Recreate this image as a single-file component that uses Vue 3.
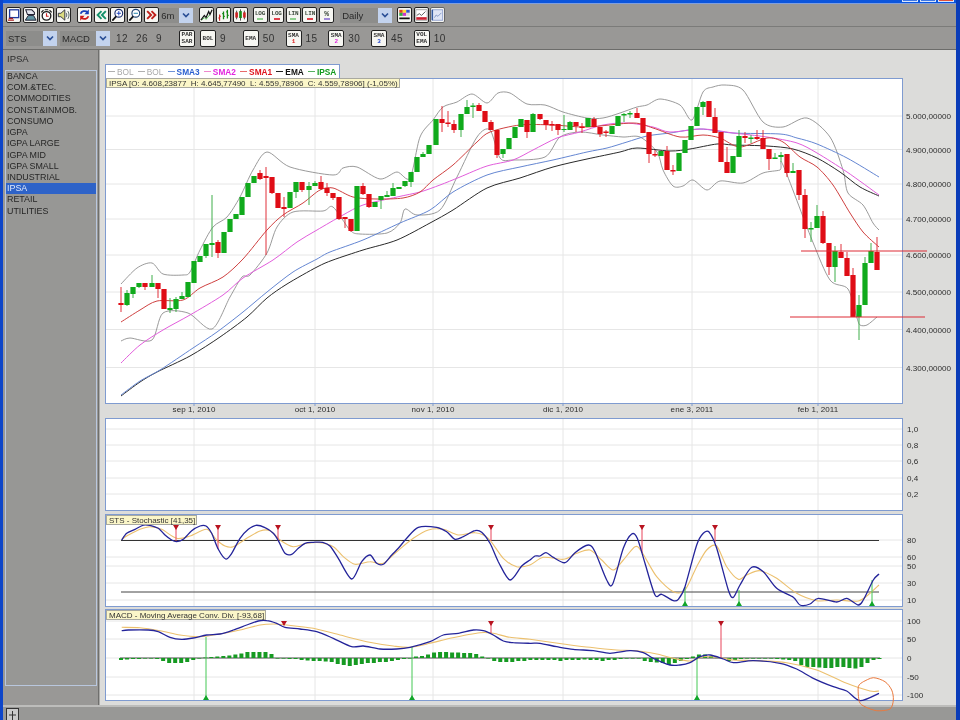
<script setup>
const z = (ox, oy, a) => a.map((p) => [ox + p[0] / 3, oy + p[1] / 3])
const smooth = (a) => {
  let d = `M${a[0][0].toFixed(1)} ${a[0][1].toFixed(1)}`
  for (let i = 0; i < a.length - 1; i++) {
    const p0 = a[Math.max(i - 1, 0)], p1 = a[i], p2 = a[i + 1], p3 = a[Math.min(i + 2, a.length - 1)]
    const c1x = p1[0] + (p2[0] - p0[0]) / 7, c1y = p1[1] + (p2[1] - p0[1]) / 7
    const c2x = p2[0] - (p3[0] - p1[0]) / 7, c2y = p2[1] - (p3[1] - p1[1]) / 7
    d += `C${c1x.toFixed(1)} ${c1y.toFixed(1)} ${c2x.toFixed(1)} ${c2y.toFixed(1)} ${p2[0].toFixed(1)} ${p2[1].toFixed(1)}`
  }
  return d
}

const sectors = ['BANCA', 'COM.&TEC.', 'COMMODITIES', 'CONST.&INMOB.', 'CONSUMO', 'IGPA', 'IGPA LARGE', 'IGPA MID', 'IGPA SMALL', 'INDUSTRIAL', 'IPSA', 'RETAIL', 'UTILITIES']

const legend = [
  { name: 'BOL', c: '#a8a8a8', l: '#b0b0b0', w: 400 },
  { name: 'BOL', c: '#a8a8a8', l: '#b0b0b0', w: 400 },
  { name: 'SMA3', c: '#2a5fd0', l: '#6f93d8', w: 700 },
  { name: 'SMA2', c: '#e326e0', l: '#ee88cc', w: 700 },
  { name: 'SMA1', c: '#e0141e', l: '#e86a6a', w: 700 },
  { name: 'EMA', c: '#111', l: '#222', w: 700 },
  { name: 'IPSA', c: '#109a1c', l: '#55b060', w: 700 },
]

const vgrid = [194, 315, 433, 563, 692, 818]
const dates = ['sep 1, 2010', 'oct 1, 2010', 'nov 1, 2010', 'dic 1, 2010', 'ene 3, 2011', 'feb 1, 2011']
const priceAxis = [[116, '5.000,00000'], [149.5, '4.900,00000'], [184, '4.800,00000'], [219, '4.700,00000'], [255, '4.600,00000'], [292, '4.500,00000'], [329.5, '4.400,00000'], [367.5, '4.300,00000']]
const midAxis = [[429, '1,0'], [445, '0,8'], [461, '0,6'], [478, '0,4'], [494, '0,2']]
const stsAxis = [[540, '80'], [557, '60'], [566, '50'], [583, '30'], [600, '10']]
const macdAxis = [[621, '100'], [639, '50'], [658, '0'], [677, '-50'], [695, '-100']]

const candles = [
  [121,'r',303,305,287,312],[127,'g',293,305,290,306],[133,'g',287,294,287,298],[139,'g',283,287,283,288],
  [145,'r',283,287,283,290],[152,'g',283,287,275,287],[158,'r',283,289,283,298],[164,'r',289,309,289,309],
  [170,'g',308,310,298,313],[176,'g',299,309,297,312],[182,'g',296,299,292,299],[188,'g',282,297,282,297],
  [194,'g',261,283,261,283],[200,'g',256,262,256,262],[206,'g',244,256,244,258],[212,'g',243,245,195,257],
  [218,'r',242,253,240,258],[224,'g',232,253,232,253],[230,'g',219,232,219,232],[236,'g',214,219,214,219],
  [242,'g',197,215,197,215],[248,'g',183,197,183,197],[254,'g',176,183,176,183],[260,'r',173,179,170,180],
  [266,'r',176,178,167,255],[272,'r',177,193,177,194],[278,'r',193,208,193,208],[284,'r',207,209,197,217],
  [290,'g',192,208,192,208],[296,'g',182,192,182,198],[302,'r',182,190,182,192],[309,'g',186,190,182,205],
  [315,'g',183,186,181,186],[321,'r',182,189,176,190],[327,'r',188,193,183,196],[333,'r',193,198,193,200],
  [339,'r',197,219,197,220],[345,'r',217,219,218,228],[351,'r',219,231,219,232],[357,'g',186,231,186,231],
  [363,'r',186,194,183,195],[369,'r',194,207,194,208],[375,'g',202,207,202,207],[381,'g',196,200,196,209],
  [387,'g',195,197,191,197],[393,'g',188,196,183,196],[399,'g',187,189,187,189],[405,'g',181,186,181,187],
  [411,'g',172,182,172,187],[417,'g',157,172,157,172],[423,'g',154,157,152,157],[429,'g',145,154,145,154],
  [436,'g',119,145,119,145],[442,'r',119,123,106,132],[448,'r',122.5,124,111,127],[454,'r',124,130,120,133],
  [461,'g',114,130,114,137],[467,'g',107,114,100,114],[473,'g',105.5,107,103,118],[479,'r',105,111,103,111],
  [485,'r',111,122,111,122],[491,'r',122,130,120,130],[497,'r',130,155,130,158],[503,'g',149,154,149,158],
  [509,'g',138,149,138,149],[515,'g',127,138,127,138],[521,'g',119,127,119,127],[527,'r',120,132,120,138],
  [533,'g',114,132,113,132],[540,'r',114,119,114,120],[546,'r',120,125,120,130],[552,'r',124,125.5,121,131],
  [558,'r',124,130,124,135],[564,'g',129,130,115,132],[570,'g',122,130,121,130],[576,'r',122,126,122,132],
  [582,'r',126.5,128,123,133],[588,'g',118,127,118,127],[594,'r',119,127,117,127],[600,'r',127,134,127,137],
  [606,'r',131.5,133,130,137],[612,'g',126,134,126,134],[618,'g',116,126,116,126],[624,'g',114,115.5,113,122],
  [630,'g',113,114.5,111,118],[637,'r',113,118,108,118],[643,'r',118,133,118,133],[649,'r',132,154,132,163],
  [655,'r',154,155.5,150,157],[661,'g',151,156,151,156],[667,'r',151,170,146,170],[673,'r',170,171.5,165,175],
  [679,'g',153,171,153,171],[685,'g',140,153,140,153],[691,'g',126,140,126,140],[697,'g',107,126,107,126],
  [703,'g',102,107,101,115],[709,'r',101,117,101,117],[715,'r',117,133,108,133],[721,'r',132,162,132,162],
  [727,'r',162,173,147,173],[733,'g',156,173,156,173],[739,'g',136,157,130,157],[745,'r',136,138,132,143],
  [751,'g',137.5,139,135,143],[757,'r',137,139,130,140],[763,'r',138,149,130,149],[769,'r',149,159,149,170],
  [775,'g',157.5,159,153,159],[781,'g',155,157,152,162],[787,'r',154,173,154,177],[793,'g',171,173,163,173],
  [799,'r',170,195,170,200],[805,'r',195,229,189,238],[811,'g',228,229.5,222,242],[817,'g',216,228,205,228],
  [823,'r',216,243,211,244],[829,'r',243,267,243,275],[835,'g',251,267,246,282],[841,'r',252,258,244,258],
  [847,'r',258,276,252,276],[853,'r',275,317,268,317],[859,'g',305,317,295,340],[865,'g',263,305,257,305],
  [871,'g',251,263,243,263],[877,'r',252,270,237,270],
]

const ema = [[121,396],[140,382],[157,372],[190,356],[220,337],[247,317],[267,298],[287,284],[317,267],[333,260],[363,250],[397,240],[430,223],[453,210],[487,188],[520,178],[553,167],[587,159],[620,152],[637,148],[670,151],[690,149],[717,144],[733,145],[767,146],[793,149],[817,158],[840,172],[860,187],[879,196]]
const sma3 = [[121,395],[140,381],[160,370],[193,348],[217,332],[243,312],[267,292],[293,272],[317,259],[330,252],[363,240],[400,223],[430,210],[453,192],[487,175],[520,167],[553,160],[587,152],[607,148],[627,142],[647,136],[670,133],[700,129],[733,133],[780,134],[797,138],[817,144],[847,158],[879,177]]
const sma2 = [[121,363],[140,345],[163,330],[190,315],[223,295],[243,278],[273,260],[297,242],[317,230],[343,215],[363,205],[397,197],[420,192],[440,185],[460,177],[487,166],[513,160],[533,150],[557,138],[580,132],[603,125],[627,123],[653,127],[670,132],[703,129],[733,133],[767,137],[797,143],[817,153],[847,172],[879,195]]
const sma1 = [[121,322],[140,310],[157,301],[183,300],[200,288],[223,277],[243,259],[267,230],[283,215],[303,203],[320,190],[333,188],[353,197],[377,199],[403,198],[420,192],[433,180],[453,165],[477,142],[490,132],[520,125],[553,125],[587,127],[633,123],[653,128],[680,137],[703,135],[720,138],[740,147],[767,138],[783,142],[800,157],[817,167],[833,185],[850,213],[863,232],[879,247]]
const bolUp = [[121,284],[137,268],[152,263],[163,274],[183,275],[190,272],[200,250],[213,227],[227,217],[240,197],[253,170],[267,152],[290,167],[333,175],[343,168],[357,167],[380,179],[397,172],[410,178],[420,137],[433,120],[443,107],[457,102],[472,94],[487,103],[498,93],[510,93],[527,104],[545,105],[563,112],[587,118],[603,118],[620,113],[637,107],[647,105],[660,99],[680,105],[692,120],[703,92],[713,87],[725,85],[743,90],[763,122],[783,127],[807,118],[830,137],[843,170],[848,193],[863,205],[873,223],[879,230]]
const bolLow = [[121,341],[130,338],[152,340],[163,313],[188,313],[212,329],[230,297],[242,277],[250,275],[267,253],[277,227],[293,212],[323,211],[333,207],[350,230],[360,234],[387,233],[400,223],[405,209],[417,215],[440,210],[457,177],[477,137],[490,130],[500,158],[513,160],[545,157],[560,137],[580,132],[603,135],[623,137],[640,137],[657,152],[663,170],[673,186],[683,186],[693,180],[707,190],[720,181],[743,183],[763,173],[780,170],[783,165],[812,240],[830,280],[848,289],[857,318],[860,325],[867,325],[877,317]]

const priceLines = [
  { key: 'bu', d: smooth(bolUp), c: '#8e8e8e', w: 0.9 },
  { key: 'bl', d: smooth(bolLow), c: '#8e8e8e', w: 0.9 },
  { key: 'e', d: smooth(ema), c: '#2a2a2a', w: 1 },
  { key: 's3', d: smooth(sma3), c: '#6486d2', w: 1 },
  { key: 's2', d: smooth(sma2), c: '#e25ddc', w: 1 },
  { key: 's1', d: smooth(sma1), c: '#cf4040', w: 1 },
]

const stsBlue = smooth([...z(100,510,[[65,90],[80,70],[105,58],[130,45],[150,46],[175,55],[195,75],[215,90],[230,95],[250,88],[275,62],[300,48],[318,48],[335,70],[355,118],[377,147],[395,130],[420,85],[445,58],[468,46],[495,53],[520,70],[535,92],[555,130],[575,133],[595,115],[615,100],[640,97],[668,97],[690,108],[715,145],[755,207],[785,155],[810,135],[830,160],[850,163],[875,135],[895,115],[920,85],[955,52],[1010,52],[1040,65],[1065,88],[1090,80],[1125,62],[1145,67],[1170,100],[1195,155],[1230,210],[1265,168]]),
  ...z(530,510,[[0,150],[15,138],[30,138],[48,128],[70,142],[105,158],[135,128],[175,105],[195,125],[230,210],[248,222],[280,115],[305,72],[322,85],[345,160],[375,255],[395,253],[430,272],[445,268],[465,230],[500,105],[520,70],[538,67],[560,115],[595,240],[610,262],[630,225],[665,172],[700,185],[740,235],[790,262],[810,285],[840,282],[865,265],[920,276],[950,265],[985,285],[1000,270],[1030,210],[1047,192]])])
const stsOrange = smooth([...z(100,510,[[65,88],[85,75],[120,58],[150,50],[185,58],[230,85],[270,78],[320,58],[350,90],[375,108],[400,110],[440,85],[480,63],[510,62],[540,90],[580,110],[620,100],[660,98],[700,110],[730,140],[765,163],[810,155],[850,160],[890,125],[940,85],[985,60],[1030,58],[1075,75],[1125,68],[1165,85],[1210,145],[1250,170]]),
  ...z(530,510,[[0,165],[40,142],[100,148],[140,130],[180,120],[215,150],[250,180],[280,150],[315,110],[335,125],[380,200],[430,245],[465,240],[500,170],[530,120],[560,108],[590,170],[625,208],[650,195],[690,182],[740,205],[800,250],[860,272],[920,270],[985,273],[1020,250],[1047,225]])])
const macdBlue = smooth([...z(100,510,[[65,362],[85,360],[145,360],[175,365],[210,382],[245,388],[280,384],[320,375],[360,372],[400,360],[440,345],[475,333],[500,332],[530,340],[555,352],[600,357],[650,365],[700,385],[755,410],[790,408],[840,417],[890,417],[930,412],[990,395],[1030,375],[1075,370],[1120,360],[1150,362],[1180,375],[1210,393],[1240,398]]),
  ...z(530,510,[[0,400],[30,400],[80,410],[130,418],[190,422],[240,430],[300,422],[340,428],[370,445],[420,465],[450,465],[480,458],[510,440],[540,435],[580,447],[610,458],[670,452],[750,460],[800,477],[850,505],[910,530],[950,543],[990,572],[1047,550]])])
const macdOrange = smooth([...z(100,510,[[65,352],[120,353],[180,362],[240,375],[300,380],[360,372],[420,360],[480,345],[520,342],[560,345],[640,355],[720,375],[800,395],[880,408],[930,412],[990,400],[1050,385],[1140,368],[1180,370],[1230,382]]),
  ...z(530,510,[[0,388],[100,402],[180,412],[260,420],[320,422],[380,432],[430,445],[480,453],[520,440],[560,442],[610,450],[680,452],[770,458],[860,480],[950,520],[1020,543],[1047,543]])])

const hist = [-2,-1.5,-1,-1,-.5,-.5,-1,-3,-5,-5,-5,-4,-2,0,.5,1,1.5,2,2.5,3.5,4.5,6,6,6,6,4,0,-.5,-1,-1,-2,-2.5,-3,-3,-3.5,-4,-6,-7,-8,-7,-6,-5,-5,-4,-4,-3,-2,-1,0,1.5,2,3.5,5.5,6,6,5.5,5.5,5,5,4,1.5,0,-3,-4,-4,-4,-3,-3,
  -2,-2,-2,-2,-2,-3,-2,-2,-2,-1.5,-2,-2,-3,-2,-2,-1,0,0,0,-3,-4,-4.5,-5,-7,-5,-3,-1,1.5,3.5,3.5,2,.5,-1,-3,-2,-1,0,0,0,0,-.5,-1,-1.5,-2,-3,-7,-9,-9,-9.5,-10,-10,-9,-9,-10,-10.5,-9,-5,-2,-1]
const bars = hist.map((v, i) => ({ x: 121 + i * 6.02 - 2, y: v > 0 ? 658 - v : 658, h: Math.max(Math.abs(v), 0.6) }))

const stsDown = [[176, 542], [218, 549], [278, 541], [491, 541], [642, 553], [715, 542]]
const stsUp = [[685, 587], [739, 590], [872, 580]]
const macdDown = [[284, 625], [491, 633], [721, 658]]
const macdUp = [[206, 637], [412, 647], [697, 657]]
const circle = smooth(z(530, 510, [[1000,515],[1030,503],[1065,515],[1085,540],[1090,570],[1080,597],[1040,602],[1005,590],[988,575],[985,530],[1000,515]]))
</script>

<template>
  <div class="window">
    <div class="titlebar">
      <span class="wbtn"></span><span class="wbtn"></span><span class="wbtn close"></span>
    </div>

    <div class="toolbar row-one">
      <div class="group">
        <button class="tool"><svg viewBox="0 0 15 15"><rect x="3" y="1.500" width="10.500" height="9" fill="#fff" stroke="#1f3a9c" stroke-width="1.500"/><path d="M1 13.500h7M2 11.500h5" stroke="#a22" stroke-width="1.500"/></svg></button>
        <button class="tool"><svg viewBox="0 0 15 15"><path d="M2 1.500h7l3 3v2.500H4z" fill="#e4e6ee" stroke="#223" stroke-width="1.200"/><path d="M1.500 13.500L5 8h6l3 5.500z" fill="#5f93a2" stroke="#223" stroke-width="1.100"/></svg></button>
        <button class="tool"><svg viewBox="0 0 15 15"><circle cx="7.500" cy="8.500" r="5" fill="#fff" stroke="#1c1c1c" stroke-width="1.500"/><path d="M7.500 5.500v3.500h2.500" fill="none" stroke="#c22" stroke-width="1.300"/><path d="M5.500 1.500h4M1.500 4.500l2.500-2.500M13.500 4.500L11 2" stroke="#1c1c1c" stroke-width="1.300"/></svg></button>
        <button class="tool"><svg viewBox="0 0 15 15"><path d="M1.500 5.500h3L9 1.500v12L4.500 9.500h-3z" fill="#dcdc80" stroke="#334" stroke-width="1.100"/><path d="M10.500 5c1 1.500 1 3.500 0 5M12.500 3c1.800 2.800 1.800 6.200 0 9" fill="none" stroke="#566" stroke-width="1.100"/></svg></button>
      </div>
      <div class="group g2">
        <button class="tool"><svg viewBox="0 0 15 15"><path d="M3 6c1-3 5-4 8-2" fill="none" stroke="#1a3fb8" stroke-width="2"/><path d="M12.500 1v5.500H7.500z" fill="#1a3fb8"/><path d="M12 9c-1 3-5 4-8 2" fill="none" stroke="#d01818" stroke-width="2"/><path d="M2.500 14V8.500h5z" fill="#d01818"/></svg></button>
        <button class="tool"><svg viewBox="0 0 15 15"><path d="M7.500 3L3 7.500 7.500 12M12.500 3L8 7.500 12.500 12" fill="none" stroke="#14916a" stroke-width="2.200"/></svg></button>
        <button class="tool"><svg viewBox="0 0 15 15"><circle cx="9" cy="5.500" r="4.500" fill="#fff" stroke="#1c3070" stroke-width="1.300"/><path d="M6 9L1.500 14" stroke="#111" stroke-width="2"/><path d="M6.500 5.500h5M9 3v5" stroke="#1a3fb8" stroke-width="1.100"/></svg></button>
        <button class="tool"><svg viewBox="0 0 15 15"><circle cx="9" cy="5.500" r="4.500" fill="#fff" stroke="#1c4070" stroke-width="1.300"/><path d="M6 9L1.500 14" stroke="#111" stroke-width="2"/><path d="M6.500 5.500h5" stroke="#1a7fa8" stroke-width="1.100"/></svg></button>
        <button class="tool"><svg viewBox="0 0 15 15"><path d="M2.500 3L7 7.500 2.500 12M7.500 3L12 7.500 7.500 12" fill="none" stroke="#c0201a" stroke-width="2.200"/></svg></button>
      </div>
      <div class="select period"><span class="sel-text">6m</span><span class="sel-arrow"><svg viewBox="0 0 10 10"><path d="M2 3.500l3 3 3-3" fill="none" stroke="#2a4f96" stroke-width="1.700"/></svg></span></div>
      <div class="group g3">
        <button class="tool"><svg viewBox="0 0 15 15"><path d="M1 13.500L5 8l2 2.500 3-7 1.500 3.500L14 1.500" fill="none" stroke="#111" stroke-width="1.400"/><path d="M2 13.500l3-3 2 2 4-5" fill="none" stroke="#3a3" stroke-width=".9"/></svg></button>
        <button class="tool"><svg viewBox="0 0 15 15"><path d="M3 7v7M1.500 11H3M3 9h1.500" stroke="#c22" stroke-width="1.300"/><path d="M7.500 3.500v9M6 6h1.500M7.500 9H9" stroke="#181" stroke-width="1.500"/><path d="M12 1.500v10M10.500 4H12M12 8h1.500" stroke="#181" stroke-width="1.500"/></svg></button>
        <button class="tool"><svg viewBox="0 0 15 15"><path d="M3 2.500v10M7.500 1v13M12 2.500v10" stroke="#222" stroke-width=".9"/><rect x="1.500" y="4.500" width="3" height="6" fill="#c22"/><rect x="6" y="3" width="3" height="8" fill="#181"/><rect x="10.500" y="4.500" width="3" height="6" fill="#c22"/></svg></button>
      </div>
      <div class="group g4">
        <button class="tool stack"><span class="tx">LOG</span><i class="mark green"></i></button>
        <button class="tool stack"><span class="tx">LOG</span><i class="mark red"></i></button>
        <button class="tool stack"><span class="tx">LIN</span><i class="mark green"></i></button>
        <button class="tool stack"><span class="tx">LIN</span><i class="mark red"></i></button>
        <button class="tool stack"><span class="tx pct">%</span><i class="mark violet"></i></button>
      </div>
      <div class="select interval"><span class="sel-text">Daily</span><span class="sel-arrow"><svg viewBox="0 0 10 10"><path d="M2 3.500l3 3 3-3" fill="none" stroke="#2a4f96" stroke-width="1.700"/></svg></span></div>
      <div class="group g5">
        <button class="tool"><svg viewBox="0 0 15 15"><rect x="1.500" y="1.500" width="4" height="3.500" fill="#d42"/><rect x="5.500" y="1.500" width="4" height="3.500" fill="#fd3"/><rect x="9.500" y="1.500" width="4" height="3.500" fill="#35c"/><rect x="1.500" y="5" width="4" height="3.500" fill="#3a4"/><rect x="5.500" y="5" width="4" height="3.500" fill="#c3c"/><rect x="9.500" y="5" width="4" height="3.500" fill="#ddd"/><path d="M1.500 11.500h12" stroke="#111" stroke-width="2"/></svg></button>
        <button class="tool"><svg viewBox="0 0 15 15"><rect x="1" y="1.500" width="13" height="12" fill="#fff" stroke="#888" stroke-width=".8"/><path d="M2 8l3-2 2.500 2L12 3.500" fill="none" stroke="#444" stroke-width="1"/><rect x="1.500" y="10" width="12" height="3" fill="#c23"/></svg></button>
        <button class="tool soft"><svg viewBox="0 0 15 15"><rect x="1.500" y="1.500" width="12" height="12" fill="#dfe5f5" stroke="#8294c8" stroke-width=".9"/><path d="M4 10.500l2-3 2 1.500L12 5" fill="none" stroke="#7890c0" stroke-width="1"/><path d="M1.500 1.500v12" stroke="#345a9e" stroke-width="1.800"/></svg></button>
      </div>
    </div>

    <div class="toolbar row-two">
      <div class="select ind-a"><span class="sel-text">STS</span><span class="sel-arrow"><svg viewBox="0 0 10 10"><path d="M2 3.500l3 3 3-3" fill="none" stroke="#2a4f96" stroke-width="1.700"/></svg></span></div>
      <div class="select ind-b"><span class="sel-text">MACD</span><span class="sel-arrow"><svg viewBox="0 0 10 10"><path d="M2 3.500l3 3 3-3" fill="none" stroke="#2a4f96" stroke-width="1.700"/></svg></span></div>
      <span class="param p12">12</span><span class="param p26">26</span><span class="param p9">9</span>
      <button class="tool two sar"><span>PAR</span><span>SAR</span></button>
      <button class="tool two bol"><span>BOL</span></button><span class="param n">9</span>
      <button class="tool two ema"><span>EMA</span></button><span class="param n">50</span>
      <button class="tool two sma"><span>SMA</span><span class="num red">1</span></button><span class="param n">15</span>
      <button class="tool two sma"><span>SMA</span><span class="num magenta">2</span></button><span class="param n">30</span>
      <button class="tool two sma"><span>SMA</span><span class="num blue">3</span></button><span class="param n">45</span>
      <button class="tool two sma"><span>VOL</span><span>EMA</span></button><span class="param n">10</span>
    </div>

    <div class="body">
      <aside class="sidebar">
        <div class="current">IPSA</div>
        <ul class="list">
          <li v-for="s in sectors" :key="s" :class="{ selected: s === 'IPSA' }">{{ s }}</li>
        </ul>
      </aside>

      <main class="charts">
        <div class="legend">
          <span v-for="(l, i) in legend" :key="i" class="leg-item">
            <i class="leg-line" :style="{ background: l.l }"></i>
            <b :style="{ color: l.c, fontWeight: l.w }">{{ l.name }}</b>
          </span>
        </div>

        <section class="panel p-main">
          <div class="info">IPSA [O: 4.608,23877&nbsp; H: 4.645,77490&nbsp; L: 4.559,78906&nbsp; C: 4.559,78906] (-1,05%)</div>
          <svg width="855" height="340" viewBox="105 78 855 340">
            <rect x="105.500" y="78.500" width="797" height="325" fill="#fff" stroke="#7f9bd0"/>
            <line v-for="x in vgrid" :key="x" :x1="x" :x2="x" y1="79" y2="403" class="grid"/>
            <line v-for="a in priceAxis" :key="a[1]" x1="106" x2="902" :y1="a[0]" :y2="a[0]" class="grid"/>
            <path v-for="l in priceLines" :key="l.key" :d="l.d" fill="none" :stroke="l.c" :stroke-width="l.w"/>
            <g v-for="c in candles" :key="c[0]">
              <line :x1="c[0]" :x2="c[0]" :y1="c[4]" :y2="c[5]" :stroke="c[1] === 'g' ? '#3fae4a' : '#e0303a'" stroke-width="1"/>
              <rect :x="c[0] - 2.600" :y="c[2]" width="5.200" :height="c[3] - c[2]" :fill="c[1] === 'g' ? '#10aa1c' : '#df0d16'"/>
            </g>
            <line x1="801" x2="927" y1="251" y2="251" stroke="#dd2a35"/>
            <line x1="790" x2="925" y1="317" y2="317" stroke="#dd2a35"/>
            <text v-for="a in priceAxis" :key="a[1]" x="906" :y="a[0] + 3" class="axis">{{ a[1] }}</text>
            <g v-for="(d, i) in dates" :key="d">
              <line :x1="vgrid[i]" :x2="vgrid[i]" y1="403" y2="406" stroke="#7f9bd0"/>
              <text :x="vgrid[i]" y="412" text-anchor="middle" class="axis date">{{ d }}</text>
            </g>
          </svg>
        </section>

        <section class="panel p-mid">
          <svg width="855" height="93" viewBox="105 418 855 93">
            <rect x="105.500" y="418.500" width="797" height="92" fill="#fff" stroke="#7f9bd0"/>
            <line v-for="x in vgrid" :key="x" :x1="x" :x2="x" y1="419" y2="510" class="grid"/>
            <line v-for="a in midAxis" :key="a[1]" x1="106" x2="902" :y1="a[0]" :y2="a[0]" class="grid"/>
            <text v-for="a in midAxis" :key="a[1]" x="907" :y="a[0] + 3" class="axis">{{ a[1] }}</text>
          </svg>
        </section>

        <section class="panel p-sts">
          <div class="info">STS - Stochastic [41,35]</div>
          <svg width="855" height="93" viewBox="105 514 855 93">
            <rect x="105.500" y="514.500" width="797" height="92" fill="#fff" stroke="#7f9bd0"/>
            <line v-for="x in vgrid" :key="x" :x1="x" :x2="x" y1="515" y2="606" class="grid"/>
            <line v-for="a in stsAxis" :key="a[1]" x1="106" x2="902" :y1="a[0]" :y2="a[0]" class="grid"/>
            <line x1="121" x2="879" y1="540.500" y2="540.500" stroke="#333"/>
            <line x1="121" x2="879" y1="592" y2="592" stroke="#444"/>
            <path :d="stsOrange" fill="none" stroke="#ecc06e" stroke-width="1.100"/>
            <g v-for="m in stsDown" :key="m[0]">
              <line :x1="m[0]" :x2="m[0]" y1="526" :y2="m[1]" stroke="#e8455a"/>
              <path :d="`M${m[0] - 3} 525h6l-3 5z`" fill="#b81420"/>
            </g>
            <g v-for="m in stsUp" :key="m[0]">
              <line :x1="m[0]" :x2="m[0]" y1="605" :y2="m[1]" stroke="#45c855"/>
              <path :d="`M${m[0] - 3} 606h6l-3 -5z`" fill="#12a52a"/>
            </g>
            <path :d="stsBlue" fill="none" stroke="#24249a" stroke-width="1.300"/>
            <text v-for="a in stsAxis" :key="a[1]" x="907" :y="a[0] + 3" class="axis">{{ a[1] }}</text>
          </svg>
        </section>

        <section class="panel p-macd">
          <div class="info">MACD - Moving Average Conv. Div. [-93,68]</div>
          <svg width="855" height="96" viewBox="105 609 855 96">
            <rect x="105.500" y="609.500" width="797" height="91" fill="#fff" stroke="#7f9bd0"/>
            <line v-for="x in vgrid" :key="x" :x1="x" :x2="x" y1="610" y2="700" class="grid"/>
            <line v-for="a in macdAxis" :key="a[1]" x1="106" x2="902" :y1="a[0]" :y2="a[0]" class="grid"/>
            <line x1="120" x2="880" y1="658" y2="658" stroke="#444" stroke-width=".9"/>
            <rect v-for="(b, i) in bars" :key="i" :x="b.x" :y="b.y" width="4" :height="b.h" fill="#169a22"/>
            <path :d="macdOrange" fill="none" stroke="#ecc06e" stroke-width="1.100"/>
            <g v-for="m in macdDown" :key="m[0]">
              <line :x1="m[0]" :x2="m[0]" y1="622" :y2="m[1]" stroke="#e8455a"/>
              <path :d="`M${m[0] - 3} 621h6l-3 5z`" fill="#b81420"/>
            </g>
            <g v-for="m in macdUp" :key="m[0]">
              <line :x1="m[0]" :x2="m[0]" y1="699" :y2="m[1]" stroke="#45c855"/>
              <path :d="`M${m[0] - 3} 700h6l-3 -5z`" fill="#12a52a"/>
            </g>
            <path :d="macdBlue" fill="none" stroke="#24249a" stroke-width="1.300"/>
            <text v-for="a in macdAxis" :key="a[1]" x="907" :y="a[0] + 3" class="axis">{{ a[1] }}</text>
            <path :d="circle" fill="none" stroke="#ea7a3e" stroke-width="1"/>
          </svg>
        </section>
      </main>
    </div>

    <footer class="status">
      <span class="corner"><svg viewBox="0 0 13 12" width="13" height="12"><rect x=".5" y=".5" width="12" height="12" fill="#c9c9c9" stroke="#333"/><path d="M6.500 3v9M3 7h7" stroke="#333" stroke-width="1"/></svg></span>
    </footer>
  </div>
</template>

<style scoped>
.window {
  width: 960px;
  height: 720px;
  box-sizing: border-box;
  display: flex;
  flex-direction: column;
  overflow: hidden;
  position: relative;
  background: #999896;
  border-left: 3px solid #0d45c9;
  border-right: 4px solid #0a3cb8;
  font-family: "Liberation Sans", Arial, sans-serif;
  filter: blur(0.35px);
}
.titlebar {
  height: 4px;
  flex: none;
  background: #0b55dc;
  display: flex;
  justify-content: flex-end;
  gap: 2px;
  padding-right: 2px;
  overflow: hidden;
  border-bottom: 1px solid #7f9fe0;
  box-sizing: border-box;
}
.wbtn {
  width: 14px;
  height: 1px;
  background: #3e78e6;
  border-bottom: 1px solid #dbe6fb;
  border-left: 1px solid #dbe6fb;
  border-right: 1px solid #dbe6fb;
}
.wbtn.close { background: #e0523a; }
.toolbar {
  display: flex;
  align-items: center;
  flex: none;
  background: #999896;
  border-bottom: 1px solid #7b7b79;
  box-sizing: border-box;
  padding-left: 3px;
}
.row-one { height: 23px; }
.row-two { height: 23px; border-bottom-color: #6c6c6a; }
.group { display: flex; gap: 1.670px; }
.g2 { margin-left: 6px; }
.g3 { margin-left: 6px; }
.g4 { margin-left: 5px; }
.g5 { margin-left: 5px; }
.tool {
  width: 15px;
  height: 16px;
  box-sizing: border-box;
  flex: none;
  padding: 0;
  margin: 0;
  border: 1px solid #222;
  border-radius: 2px;
  background: #f6f6f2;
  display: flex;
  align-items: center;
  justify-content: center;
  flex-direction: column;
  font-family: "Liberation Mono", monospace;
  color: #333;
  overflow: hidden;
}
.tool svg { width: 13px; height: 14px; display: block; }
.tool.soft { border-color: #666; }
.tool.stack .tx { font-size: 6px; line-height: 7px; font-weight: 700; color: #3d4a3d; letter-spacing: -.2px; }
.tool.stack .pct { font-size: 8px; }
.mark { display: block; width: 6px; height: 2px; margin-top: 1.500px; }
.mark.green { background: #8fd18f; }
.mark.red { background: #e0404a; }
.mark.violet { background: #a08ad8; }
.select {
  display: flex;
  height: 15px;
  flex: none;
  background: #8d8d8b;
  align-items: stretch;
}
.sel-text {
  flex: 1;
  font-size: 9.500px;
  line-height: 15px;
  padding-left: 2px;
  color: #2a2a2a;
}
.sel-arrow {
  width: 14px;
  background: #c3d3ee;
  display: flex;
  align-items: center;
  justify-content: center;
}
.sel-arrow svg { width: 10px; height: 10px; }
.period { width: 34px; margin-left: .6px; }
.interval { width: 52px; margin-left: 6px; }
.ind-a { width: 51px; }
.ind-b { width: 50px; margin-left: 3px; }
.param { font-size: 10px; color: #333; letter-spacing: .4px; flex: none; }
.p12 { margin-left: 6px; width: 20px; }
.p26 { width: 20px; }
.p9 { width: 23px; }
.n { margin-left: 4px; width: 22.750px; }
.two { height: 17px; width: 16px; gap: 0; }
.bol { margin-left: 5px; }
.two span { font-size: 6px; line-height: 7px; font-weight: 700; }
.two .num { font-size: 6px; line-height: 6px; }
.num.red { color: #d22; }
.num.magenta { color: #d2d; }
.num.blue { color: #24c; }
.body { flex: 1; display: flex; min-height: 0; }
.sidebar {
  width: 96px;
  flex: none;
  display: flex;
  flex-direction: column;
  border-right: 1px solid #6f6f6d;
  box-sizing: border-box;
  background: #999896;
  padding-left: 2px;
}
.current {
  font-size: 9.500px;
  height: 20px;
  line-height: 18px;
  padding-left: 2px;
  color: #2c2c2c;
}
.list {
  list-style: none;
  margin: 0;
  padding: 0;
  width: 92px;
  height: 616px;
  box-sizing: border-box;
  border: 1px solid #b9c7de;
  background: #979795;
}
.list li {
  font-size: 8.900px;
  line-height: 11.230px;
  height: 11.230px;
  padding-left: 1px;
  color: #262626;
  white-space: nowrap;
}
.list li.selected { background: #2e63c8; color: #dfe8fb; }
.charts {
  width: 857px;
  flex: none;
  height: 655px;
  background: #dcdcda;
  box-sizing: border-box;
  padding: 14px 0 0 5px;
  display: flex;
  flex-direction: column;
  border-left: 1px solid #a9a9a7;
}
.legend {
  height: 14px;
  width: 235px;
  box-sizing: border-box;
  border: 1px solid #7f9bd0;
  border-bottom: 0;
  background: #fff;
  display: flex;
  align-items: center;
  padding-left: 2px;
  gap: 4.200px;
  flex: none;
}
.leg-item { display: inline-flex; align-items: center; gap: 2px; }
.leg-line { width: 7px; height: 1px; display: block; }
.leg-item b { font-size: 8.300px; }
.panel { position: relative; flex: none; }
.panel svg { display: block; overflow: visible; }
.p-sts { margin-top: 3px; }
.p-macd { margin-top: 2px; z-index: 1; }
.grid { stroke: #e6e6e6; stroke-width: 1; }
.axis { font-size: 8.100px; fill: #2c2c2c; font-family: "Liberation Sans", Arial, sans-serif; }
.date { font-size: 8px; letter-spacing: .1px; }
.info {
  position: absolute;
  top: 1px;
  left: 1px;
  height: 10px;
  box-sizing: border-box;
  font-size: 8px;
  line-height: 9px;
  background: #fbf6c8;
  border: 1px solid #a9a9a0;
  padding: 0 1px 0 2px;
  color: #333;
  white-space: nowrap;
}
.p-main .info { top: 0; }
.status {
  flex: none;
  height: 15px;
  background: #989896;
  border-top: 2px solid #bdbdbb;
  box-sizing: border-box;
  padding-left: 3px;
  overflow: hidden;
}
.corner { display: block; height: 13px; margin-top: 1px; }
.corner svg { display: block; }
</style>
